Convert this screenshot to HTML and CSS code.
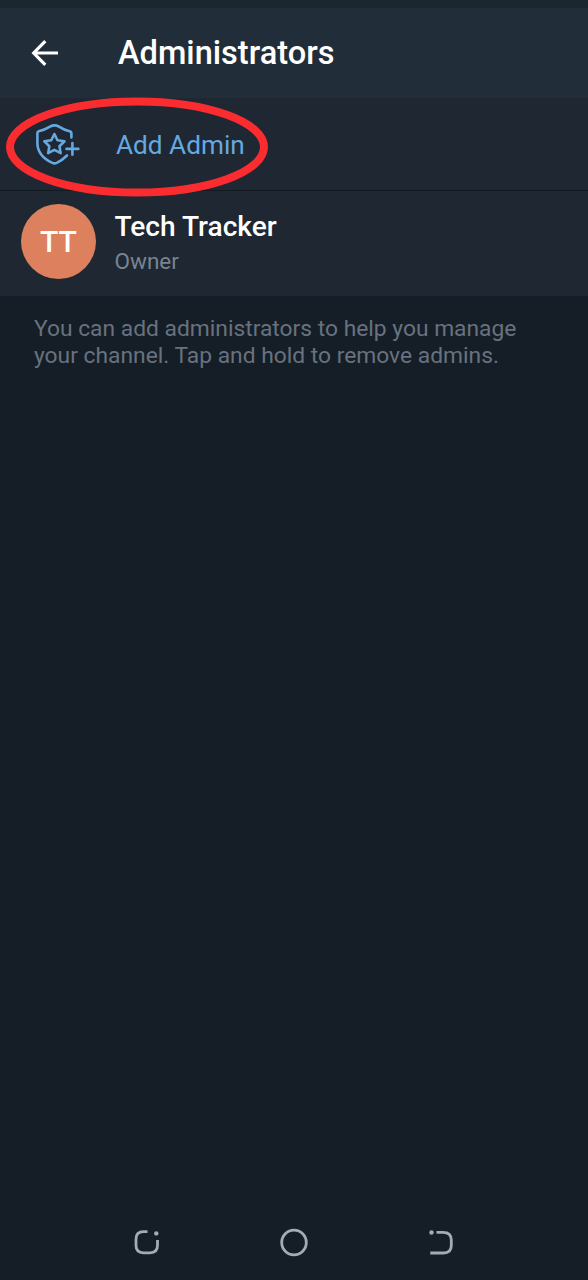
FILE: index.html
```html
<!DOCTYPE html>
<html lang="en">
<head>
<meta charset="utf-8">
<title>Administrators</title>
<link rel="stylesheet" href="styles.css">
</head>
<body>
<div class="screen">
  <div class="status-bar"></div>
  <header class="app-bar">
    <svg class="back" width="28" height="28" viewBox="0 0 28 28"><path d="M27 14H3.500M14.300 2.200 2.700 14 14.300 25.800"/></svg>
    <h1 class="title">Administrators</h1>
  </header>
  <main class="content">
    <section class="list">
      <div class="add-row">
        <svg class="shield" width="46" height="46" viewBox="0 0 46 46">
          <path d="M37.400 16.500V12.500Q37.400 10.700 35.600 10.200Q30 9 25 5.600Q20.500 3.100 16 5.600Q10.500 9 4.700 10.200Q3.400 10.700 3.400 12.500V22C3.400 32.500 10 38 18.300 41.900Q20.500 42.900 22.700 41.900Q28.300 39.200 33 34.500"/>
          <path d="m20.400 13 3.100 6.300 7 1-5.050 4.900 1.200 6.900-6.250-3.250-6.250 3.250 1.200-6.900-5.050-4.900 7-1z"/>
          <path d="M38.400 22V33.800M32.500 27.900H44.300"/>
        </svg>
        <span class="add-label">Add Admin</span>
        <svg class="highlight" width="264" height="102" viewBox="0 0 264 102"><ellipse cx="132" cy="51" rx="127" ry="45.500"/></svg>
      </div>
      <div class="member">
        <div class="avatar">TT</div>
        <div class="member-text">
          <div class="name">Tech Tracker</div>
          <div class="role">Owner</div>
        </div>
      </div>
    </section>
    <p class="hint">You can add administrators to help you manage<br>your channel. Tap and hold to remove admins.</p>
  </main>
  <nav class="nav-bar">
    <svg width="30" height="30" viewBox="0 0 30 30"><path d="M15.500 3.700H11.500Q4 3.700 4 11.200V17.300Q4 24.800 11.500 24.800H18Q25.500 24.800 25.500 17.300V12"/><circle class="dot" cx="24.300" cy="5.400" r="2.200"/></svg>
    <svg width="30" height="30" viewBox="0 0 30 30"><circle cx="15" cy="14.500" r="12.300"/></svg>
    <svg width="30" height="30" viewBox="0 0 30 30"><path d="M10.500 4.300H17Q25.300 4.300 25.300 12V17.500Q25.300 25 17.500 25H4.300"/><circle class="dot" cx="5.500" cy="4.500" r="2.200"/></svg>
  </nav>
</div>
</body>
</html>
```
FILE: styles.css
```css
body {
  margin: 0;
  background: #151e27;
  font-family: Roboto, "Liberation Sans", sans-serif;
}

.screen {
  display: flex;
  flex-direction: column;
  height: 1280px;
}

.status-bar {
  height: 8px;
  background: #1c262f;
}

.app-bar {
  display: flex;
  align-items: center;
  height: 90px;
  padding-left: 31px;
  background: #222d3a;
}

.back {
  fill: none;
  stroke: #fff;
  stroke-width: 3.2;
}

.title {
  margin: 0 0 0 59px;
  color: #fff;
  font-size: 32.6px;
  font-weight: 500;
  line-height: 40px;
}

.content {
  flex: 1;
}

.list {
  background: #1e2732;
}

.add-row {
  position: relative;
  display: flex;
  align-items: center;
  height: 92px;
  padding-left: 34px;
  border-bottom: 1px solid #121a22;
}

.shield {
  fill: none;
  stroke: #65a9e0;
  stroke-width: 2.6;
  stroke-linecap: round;
  stroke-linejoin: round;
}

.add-label {
  margin: 1px 0 0 36px;
  color: #65a9e0;
  font-size: 26.2px;
  line-height: 32px;
}

.highlight {
  position: absolute;
  z-index: 1;
  top: -2px;
  left: 5px;
  fill: none;
  stroke: #fb2c30;
  stroke-width: 8;
}

.member {
  display: flex;
  align-items: center;
  gap: 18.5px;
  height: 105px;
  padding-left: 21px;
}

.avatar {
  width: 75px;
  height: 75px;
  margin-bottom: 4px;
  border-radius: 50%;
  background: #dc805d;
  color: #fff;
  font-size: 30px;
  font-weight: 500;
  line-height: 75px;
  text-align: center;
}

.member-text {
  padding-top: 2px;
}

.name {
  color: #fff;
  font-size: 28.1px;
  font-weight: 500;
  line-height: 34px;
}

.role {
  color: #788492;
  font-size: 22.5px;
  line-height: 35px;
}

.hint {
  margin: 19px 0 0 34px;
  color: #68727e;
  font-size: 22.8px;
  line-height: 27px;
  white-space: nowrap;
}

.nav-bar {
  display: flex;
  justify-content: center;
  gap: 117px;
  height: 52px;
  fill: none;
  stroke: #a4abb4;
  stroke-width: 2.8;
}

.dot {
  fill: #a4abb4;
  stroke: none;
}
```
